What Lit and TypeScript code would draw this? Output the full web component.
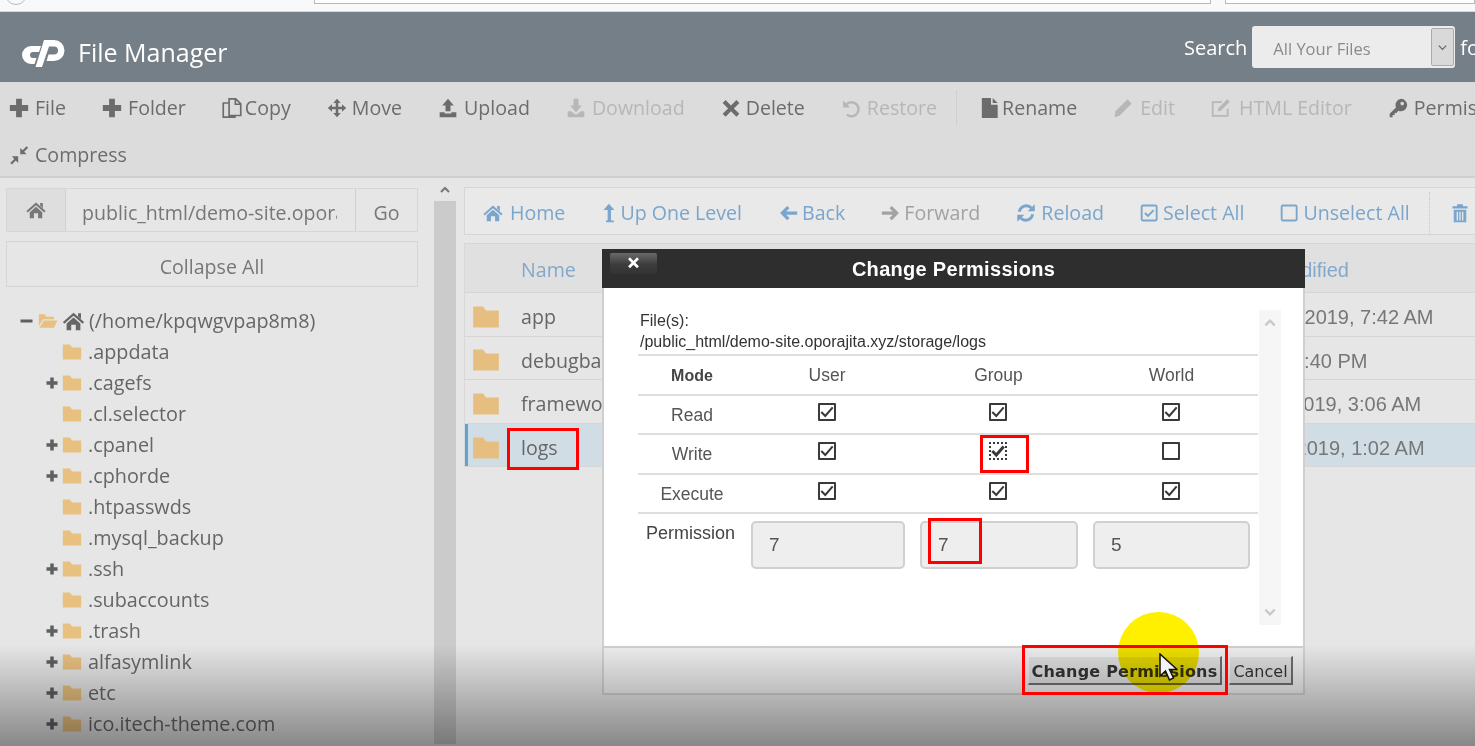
import { LitElement, html, css, svg } from "lit";
import { customElement } from "lit/decorators.js";

const icons: Record<string, unknown> = {
  home: svg`<path d="M12 3 23.500 13.200 22 15 12 6.400 2 15 .5 13.200Z"/><path d="M17 3.500h3.200v6.400L17 7Z"/><path d="M4.500 14.600 12 8.200l7.500 6.400V22H14.500v-6h-5v6H4.500Z"/>`,
  plus: svg`<path d="M8.500 1h7v7.500H23v7h-7.500V23h-7v-7.500H1v-7h7.500Z"/>`,
  copy: svg`<path d="M8.500 1h8l6 6v14h-14Z M16 1v6.500h6.500 M8.500 6H1.500v17h14v-2" fill="none" stroke="currentColor" stroke-width="2"/>`,
  move: svg`<path d="M12 1l4.500 5H13.500v4.500H18V7.500l5 4.500-5 4.500V13.500H13.500V18h3L12 23l-4.500-5h3V13.500H6v3L1 12l5-4.500v3h4.500V6h-3Z"/>`,
  upload: svg`<path d="M12 1l7 8h-4v7H9V9H5Z"/><path d="M2 17h6v1.500h8V17h6v6H2Z"/>`,
  download: svg`<path d="M9 1h6v8h4l-7 8-7-8h4Z"/><path d="M2 16h4l6 4 6-4h4v7H2Z"/>`,
  times: svg`<path d="M5.500 2.500 12 9l6.500-6.500 3.500 3.500L15.500 12.500 22 19l-3.500 3.500L12 16l-6.500 6.500L2 19l6.500-6.500L2 6Z"/>`,
  undo: svg`<path d="M6.500 7.500A8.500 8.500 0 1 1 7 20" fill="none" stroke="currentColor" stroke-width="3"/><path d="M2.500 3v8.500H11Z"/>`,
  file: svg`<path d="M1 0h11v8h8v16H1Z"/><path d="M14 0l6 6h-6Z"/>`,
  pencil: svg`<path d="M17.500 1.500l5 5L8 21l-6 2 1-7Z"/>`,
  edit: svg`<path d="M20 13v8.500H2V5h11" fill="none" stroke="currentColor" stroke-width="2.200"/><path d="M19.500 1.500l3 3L12 15l-4 1 1-4Z"/>`,
  key: svg`<path fill-rule="evenodd" d="M15.500 1a7.500 7.500 0 1 1-3 14.400L10 18H8v2.500H5.500V23H2v-4l7.600-7.600A7.500 7.500 0 0 1 15.500 1Zm1.500 3.500a2.200 2.200 0 1 0 0 4.400 2.200 2.200 0 0 0 0-4.400Z"/>`,
  compress: svg`<path d="M13.500 3.500v7.500H21l-2.800-2.800L23 3.400 21.100 1.500 16.300 6.300Z"/><path d="M11 13.500v8L8.200 18.700 3.400 23.500 1.500 21.600 6.300 16.800 3.500 13.500Z"/>`,
  up: svg`<path d="M9.500 1l6.500 7.500h-4V21h3.500v2H6v-2h2V8.500H3Z"/>`,
  left: svg`<path d="M11 3.500l2.800 2.800-3.900 3.900H23v3.800H9.900l3.900 3.900L11 20.700 2.500 12.100Z"/>`,
  right: svg`<path d="M13 3.500l-2.800 2.800 3.900 3.900H1v3.800h13.100l-3.900 3.900 2.800 2.800 8.500-8.600Z"/>`,
  refresh: svg`<path d="M4 10.500A8.500 8.500 0 0 1 18.500 6" fill="none" stroke="currentColor" stroke-width="3.400"/><path d="M22.500 1.500v8.500H14Z"/><path d="M20 13.500A8.500 8.500 0 0 1 5.500 18" fill="none" stroke="currentColor" stroke-width="3.400"/><path d="M1.500 22.500V14H10Z"/>`,
  checked: svg`<rect x="2" y="3" width="18" height="18" rx="1.500" fill="none" stroke="currentColor" stroke-width="2.200"/><path d="M6 12l3.500 3.500L16.500 8.500" fill="none" stroke="currentColor" stroke-width="2.400"/>`,
  unchecked: svg`<rect x="2" y="3" width="18" height="18" rx="1.500" fill="none" stroke="currentColor" stroke-width="2.200"/>`,
  trash: svg`<path fill-rule="evenodd" d="M8.500 1.500h7V4H21v2.500H3V4h5.500ZM4.500 8h15v15h-15ZM8 10.500V21h1.600V10.500Zm3.200 0V21h1.600V10.500Zm3.200 0V21H16V10.500Z"/>`,
  folder: svg`<path d="M1 3h8.500l2.500 3.500h11V21H1Z"/>`,
  open: svg`<path d="M1 4h7l2 3h9v3H6L1 18Z"/><path d="M7 11.500h16.500L19 20H1.500Z"/>`,
};

const icon = (name: string, cls = "") =>
  html`<svg class="icon ${cls}" viewBox="0 0 24 24" fill="currentColor">${icons[name]}</svg>`;

// icon, label, slot width up to the label, optional state
type Action = [string, string?, number?, string?];

const mainActions: Action[] = [
  ["plus", "File", 25], ["plus", "Folder", 25], ["copy", "Copy", 22], ["move", "Move", 24], ["upload", "Upload", 25],
  ["download", "Download", 25, "off"], ["times", "Delete", 24], ["undo", "Restore", 25, "off"], ["sep"],
  ["file", "Rename", 20], ["pencil", "Edit", 26, "off"], ["edit", "HTML Editor", 27, "off"], ["key", "Permissions", 25],
];

const viewActions: Action[] = [
  ["home", "Home", 26], ["up", "Up One Level", 18], ["left", "Back", 23], ["right", "Forward", 22, "grey"],
  ["refresh", "Reload", 24], ["checked", "Select All", 22], ["unchecked", "Unselect All", 22], ["sep"], ["trash", "Delete", 24],
];

const tree: [string, boolean][] = [
  [".appdata", false], [".cagefs", true], [".cl.selector", false], [".cpanel", true], [".cphorde", true],
  [".htpasswds", false], [".mysql_backup", false], [".ssh", true], [".subaccounts", false], [".trash", true],
  ["alfasymlink", true], ["etc", true], ["ico.itech-theme.com", true],
];

const files = [
  ["app", "Aug 29, 2019, 7:42 AM"],
  ["debugbar", "Today, 4:40 PM"],
  ["framework", "Mar 9, 2019, 3:06 AM"],
  ["logs", "May 9, 2019, 1:02 AM"],
];

const modes: [string, boolean, boolean, boolean][] = [
  ["Read", true, true, true],
  ["Write", true, true, false],
  ["Execute", true, true, true],
];

@customElement("app-root")
export class AppRoot extends LitElement {
  static styles = css`
    :host { display: block; }
    * { box-sizing: border-box; }
    .page {
      position: relative; width: 1475px; height: 746px; overflow: hidden;
      background: #e6e6e6; color: #666;
      font-family: "Open Sans", sans-serif; font-size: 19.600px;
    }
    .icon { width: 20px; height: 20px; flex: none; display: block; }

    .chrome { height: 12px; background: #f8f9fb; display: flex; overflow: hidden; border-bottom: 1px solid #d4d8dc; }
    .chrome-back { width: 22px; height: 22px; margin: -17px 0 0 5px; border: 1px solid #bbb; border-radius: 50%; }
    .chrome-url { height: 4px; margin-left: 287px; width: 897px; border: 1px solid #b9b9b9; border-top: 0; background: #fff; }
    .chrome-ext { height: 4px; margin-left: 14px; flex: 1; border: 1px solid #b9b9b9; border-top: 0; background: #fff; }

    .header {
      height: 70px; background: #747f88; color: #fff; display: flex; align-items: center;
      padding-left: 22px; white-space: nowrap; overflow: hidden;
    }
    .logo { width: 43px; height: 30px; flex: none; margin-top: 12px; }
    .title { font-size: 25px; margin: 10px 0 0 13px; width: 151px; flex: none; }
    .search { margin-left: 955px; display: flex; align-items: center; flex: none; font-size: 20px; }
    .select {
      width: 203px; height: 42px; margin-left: 5px; background: #ececec; border-radius: 3px; color: #8a8a8a;
      font-size: 16.500px; display: flex; align-items: center; padding: 3px 1px 0 21px; justify-content: space-between;
    }
    .select-btn {
      width: 23px; height: 38px; background: #d9d9d9; border: 1px solid #aaa; border-radius: 2px; margin-top: -3px;
      display: flex; align-items: center; justify-content: center;
    }
    .select-btn svg { width: 11px; height: 11px; color: #666; }
    .for { margin-left: 5px; }

    .actions { height: 96px; background: #dcdcdc; border-bottom: 2px solid #cfcfcf; padding: 2px 0 0 10px; overflow: hidden; }
    .action-row { display: flex; height: 47px; align-items: center; gap: 37px; white-space: nowrap; }
    .action { display: flex; align-items: center; flex: none; color: #6c6c6c; }
    .action.off { color: #b7b7b7; }
    .slot { display: block; flex: none; }
    .slot .icon { margin-left: -1px; }
    .action-sep { width: 0; height: 34px; border-left: 1px dotted #c4c4c4; margin: 0 -12px 0 -18px; flex: none; }

    .main { display: flex; height: 566px; }
    .side { width: 434px; flex: none; padding: 10px 16px 0 6px; }
    .path { display: flex; height: 44px; border: 1px solid #d6d6d6; color: #777; }
    .path-home { width: 59px; background: #dedede; border-right: 1px solid #d0d0d0; display: flex; align-items: center; justify-content: center; }
    .path-box { flex: 1; min-width: 0; padding: 0 18px 0 16px; border-right: 1px solid #d0d0d0; }
    .path-text { line-height: 48px; overflow: hidden; white-space: nowrap; height: 42px; }
    .path-go { width: 61px; text-align: center; line-height: 48px; height: 42px; overflow: hidden; }
    .collapse { height: 46px; margin-top: 9px; border: 1px solid #d4d4d4; text-align: center; line-height: 50px; color: #777; overflow: hidden; }
    .tree { margin-top: 18px; font-size: 19.800px; }
    .tree-row { height: 31px; display: flex; align-items: center; white-space: nowrap; padding-left: 40px; }
    .tree-row .toggle { width: 12px; height: 12px; flex: none; color: #5f5f5f; }
    .tree-row .gap { width: 12px; flex: none; }
    .tree-row .folder { width: 20px; height: 20px; margin: 0 6px 0 4px; color: #e8c07f; }
    .tree-root { padding-left: 14px; }
    .tree-root .toggle { width: 13px; margin-right: 4px; }
    .tree-root .folder { width: 22px; margin: 0 3px 0 0; }
    .tree-root .home { width: 23px; height: 22px; margin-right: 4px; color: #666; }

    .scroll { width: 22px; flex: none; background: #cbcbcb; position: relative; }
    .scroll-cap { height: 23px; background: #e6e6e6; display: flex; justify-content: center; align-items: center; }
    .scroll-cap svg { width: 12px; height: 12px; color: #777; }

    .content { flex: 1; min-width: 0; padding: 9px 0 0 8px; overflow: hidden; }
    .view { height: 48px; border: 1px solid #d6d6d6; border-right: 0; background: #e9e9e9; display: flex; align-items: center; gap: 37px; padding: 3px 0 0 19px; white-space: nowrap; overflow: hidden; margin-bottom: 8px; }
    .view .action { color: #7aa5cc; }
    .view .action.grey { color: #a2a2a2; }
    .view-sep { width: 0; height: 42px; border-left: 1px dotted #c8c8c8; margin: 0 -16px 0 -18px; flex: none; }
    .rows { border-left: 1px solid #d8d8d8; }
    .row { display: grid; grid-template-columns: 56px 709px 1fr; align-items: center; border-bottom: 1px solid #d6d6d6; height: 43.600px; padding-top: 5px; white-space: nowrap; }
    .row.head { height: 50px; background: #e0e0e0; color: #84a8cb; border-top: 1px solid #d6d6d6; padding-top: 3px; }
    .row.sel { background: #d0dde5; box-shadow: inset 3px 0 #5da3d6; }
    .row .folder { width: 30px; height: 28px; margin-left: 6px; color: #e6bf80; }
    .date { font-family: "Liberation Sans", sans-serif; font-size: 20px; color: #777; padding-top: 2px; }
    .row.head .date { color: #84a8cb; }

    .dialog {
      position: absolute; left: 602px; top: 249px; width: 703px; height: 446px; display: flex; flex-direction: column;
      font-family: "Liberation Sans", sans-serif; color: #333;
    }
    .dialog-title { height: 39px; background: #2e2e2e; color: #fff; font-weight: 700; font-size: 20px; text-align: center; line-height: 40px; letter-spacing: .3px; flex: none; }
    .dialog-close {
      position: absolute; left: 8px; top: 4px; width: 47px; height: 21px; border-radius: 2px;
      background: linear-gradient(#6a6a6a, #3c3c3c 55%, #333); display: flex; align-items: center; justify-content: center; padding-bottom: 3px; color: #fff;
    }
    .dialog-close svg { width: 13px; height: 13px; }
    .dialog-body { flex: 1; background: #fff; border: solid #cfcfcf; border-width: 0 2px; padding: 22px 0 0 34px; display: flex; align-items: flex-start; }
    .perm { width: 620px; flex: none; font-size: 16px; }
    .file-label { padding-left: 2px; line-height: 21px; height: 44px; color: #333; }
    .grid { display: grid; grid-template-columns: 108px 162px 181px 169px; }
    .cell { height: 39.500px; display: flex; align-items: center; justify-content: center; border-top: 2px solid #dedede; color: #555; font-size: 17.500px; padding-top: 2px; }
    .cell:nth-child(4n) { padding-right: 4px; }
    .cell.strong { font-weight: 700; color: #444; font-size: 16px; }
    .box { width: 18px; height: 18px; border: 2px solid #3a3a3a; border-radius: 1px; display: flex; align-items: center; justify-content: center; margin: -7px 0 0 -1px; color: #3a3a3a; }
    .box.focus { border-style: dotted; }
    .box.focus svg { stroke-width: 2.600; }
    .box svg { width: 16px; height: 16px; flex: none; }
    .perm-row { display: grid; grid-template-columns: 113px 154px 15px 158px 15px 157px; border-top: 2px solid #dedede; padding-top: 7px; }
    .perm-label { padding: 0 0 0 8px; line-height: 24px; color: #444; font-size: 18px; }
    .perm-value { height: 48px; background: #eee; border: 2px solid #d0d0d0; border-radius: 5px; padding-left: 16px; line-height: 44px; font-size: 19px; color: #555; }
    .dialog-scroll { width: 22px; height: 315px; margin-left: 1px; background: #f6f6f6; display: flex; flex-direction: column; justify-content: space-between; align-items: center; padding: 6px 0; color: #c8c8c8; flex: none; }
    .dialog-scroll svg { width: 14px; height: 14px; }
    .dialog-foot { height: 49px; flex: none; background: #ececec; border: 2px solid #cfcfcf; display: flex; align-items: center; justify-content: flex-end; gap: 7px; padding: 0 10px 0 0; }
    .btn { height: 29px; background: #dcdcdc; border-style: solid; border-width: 1px 2px 2px 1px; border-color: #eee #6d6d6d #6d6d6d #eee; font-family: "DejaVu Sans", sans-serif; color: #333; line-height: 29px; text-align: center; white-space: nowrap; }
    .btn.primary { width: 194px; font-weight: 700; font-size: 16px; letter-spacing: .2px; }
    .btn.cancel { width: 64px; font-size: 16px; }

    .shade { position: absolute; left: 0; right: 0; bottom: 0; height: 102px; background: linear-gradient(rgba(0,0,0,0), rgba(0,0,0,.41)); }
    .spot { position: absolute; left: 1118px; top: 612px; width: 81px; height: 81px; border-radius: 50%; background: #fff000; mix-blend-mode: multiply; }
    .mark { position: absolute; border: 3px solid #f00; }
    .mark-logs { left: 507px; top: 428px; width: 72px; height: 42px; }
    .mark-write { left: 980px; top: 435px; width: 49px; height: 38px; }
    .mark-seven { left: 928px; top: 518px; width: 54px; height: 46px; }
    .mark-btn { left: 1022px; top: 645px; width: 206px; height: 50px; }
    .pointer { position: absolute; left: 1159px; top: 653px; width: 18px; height: 28px; }
  `;

  private action(a: Action, sepClass: string) {
    if (a[0] === "sep") return html`<span class=${sepClass}></span>`;
    return html`<span class="action ${a[3] ?? ""}">
      <span class="slot" style="width:${a[2]}px">${icon(a[0])}</span>${a[1]}
    </span>`;
  }

  private checkbox(on: boolean, focus = false) {
    return html`<span class="box ${focus ? "focus" : ""}">
      ${on ? html`<svg viewBox="0 0 14 14" fill="none" stroke="currentColor" stroke-width="1.800"><path d="M2 7l3.500 3.500L12 3"/></svg>` : ""}
    </span>`;
  }

  render() {
    return html`
      <div class="page">
        <div class="chrome">
          <div class="chrome-back"></div><div class="chrome-url"></div><div class="chrome-ext"></div>
        </div>

        <div class="header">
          <svg class="logo" viewBox="0 0 43 30" fill="#fff">
            <path d="M9 8H19L17 14H11A3 3 0 0 0 11 20H14.500L12.500 26H9A9 9 0 0 1 9 8Z"/>
            <path d="M22 2H32A10.500 10.500 0 0 1 32 23H24.500L26.500 16.500H32A4 4 0 0 0 32 8.500H27L20 29H13.500Z"/>
          </svg>
          <span class="title">File Manager</span>
          <div class="search">
            <span>Search</span>
            <div class="select">
              <span>All Your Files</span>
              <span class="select-btn"><svg viewBox="0 0 12 12" fill="none" stroke="currentColor" stroke-width="1.400"><path d="M2 4l4 4 4-4"/></svg></span>
            </div>
            <span class="for">for</span>
          </div>
        </div>

        <div class="actions">
          <div class="action-row">${mainActions.map((a) => this.action(a, "action-sep"))}</div>
          <div class="action-row">${this.action(["compress", "Compress", 25], "action-sep")}</div>
        </div>

        <div class="main">
          <div class="side">
            <div class="path">
              <div class="path-home">${icon("home")}</div>
              <div class="path-box"><div class="path-text">public_html/demo-site.oporajita.xyz/storage/logs</div></div>
              <div class="path-go">Go</div>
            </div>
            <div class="collapse">Collapse All</div>
            <div class="tree">
              <div class="tree-row tree-root">
                <svg class="toggle" viewBox="0 0 12 12" fill="currentColor"><rect y="4.500" width="12" height="3"/></svg>
                ${icon("open", "folder")}${icon("home", "home")}<span>(/home/kpqwgvpap8m8)</span>
              </div>
              ${tree.map(([name, more]) => html`
                <div class="tree-row">
                  ${more ? icon("plus", "toggle") : html`<span class="gap"></span>`}
                  ${icon("folder", "folder")}<span>${name}</span>
                </div>`)}
            </div>
          </div>

          <div class="scroll">
            <div class="scroll-cap"><svg viewBox="0 0 12 12" fill="none" stroke="currentColor" stroke-width="2"><path d="M2 8l4-4 4 4"/></svg></div>
          </div>

          <div class="content">
            <div class="view">${viewActions.map((a) => this.action(a, "view-sep"))}</div>
            <div class="rows">
              <div class="row head"><span></span><span>Name</span><span class="date">Last Modified</span></div>
              ${files.map(([name, date]) => html`
                <div class="row ${name === "logs" ? "sel" : ""}">
                  ${icon("folder", "folder")}<span>${name}</span><span class="date">${date}</span>
                </div>`)}
            </div>
          </div>
        </div>

        <div class="dialog">
          <div class="dialog-title">Change Permissions</div>
          <div class="dialog-close">${icon("times")}</div>
          <div class="dialog-body">
            <div class="perm">
              <div class="file-label">File(s):<br />/public_html/demo-site.oporajita.xyz/storage/logs</div>
              <div class="grid">
                <div class="cell strong">Mode</div><div class="cell">User</div><div class="cell">Group</div><div class="cell">World</div>
                ${modes.map(([name, u, g, w]) => html`
                  <div class="cell">${name}</div>
                  <div class="cell">${this.checkbox(u)}</div>
                  <div class="cell">${this.checkbox(g, name === "Write")}</div>
                  <div class="cell">${this.checkbox(w)}</div>`)}
              </div>
              <div class="perm-row">
                <div class="perm-label">Permission</div>
                <div class="perm-value">7</div><span></span>
                <div class="perm-value">7</div><span></span>
                <div class="perm-value">5</div>
              </div>
            </div>
            <div class="dialog-scroll">
              <svg viewBox="0 0 12 12" fill="none" stroke="currentColor" stroke-width="2"><path d="M2 8l4-4 4 4"/></svg>
              <svg viewBox="0 0 12 12" fill="none" stroke="currentColor" stroke-width="2"><path d="M2 4l4 4 4-4"/></svg>
            </div>
          </div>
          <div class="dialog-foot">
            <div class="btn primary">Change Permissions</div>
            <div class="btn cancel">Cancel</div>
          </div>
        </div>

        <div class="shade"></div>
        <div class="spot"></div>
        <div class="mark mark-logs"></div>
        <div class="mark mark-write"></div>
        <div class="mark mark-seven"></div>
        <div class="mark mark-btn"></div>
        <svg class="pointer" viewBox="0 0 18 28"><path d="M1 1v22l5.500-5 4 9 4-2-4-8.500h7.500Z" fill="#f4f4f4" stroke="#111" stroke-width="1.500"/></svg>
      </div>
    `;
  }
}
